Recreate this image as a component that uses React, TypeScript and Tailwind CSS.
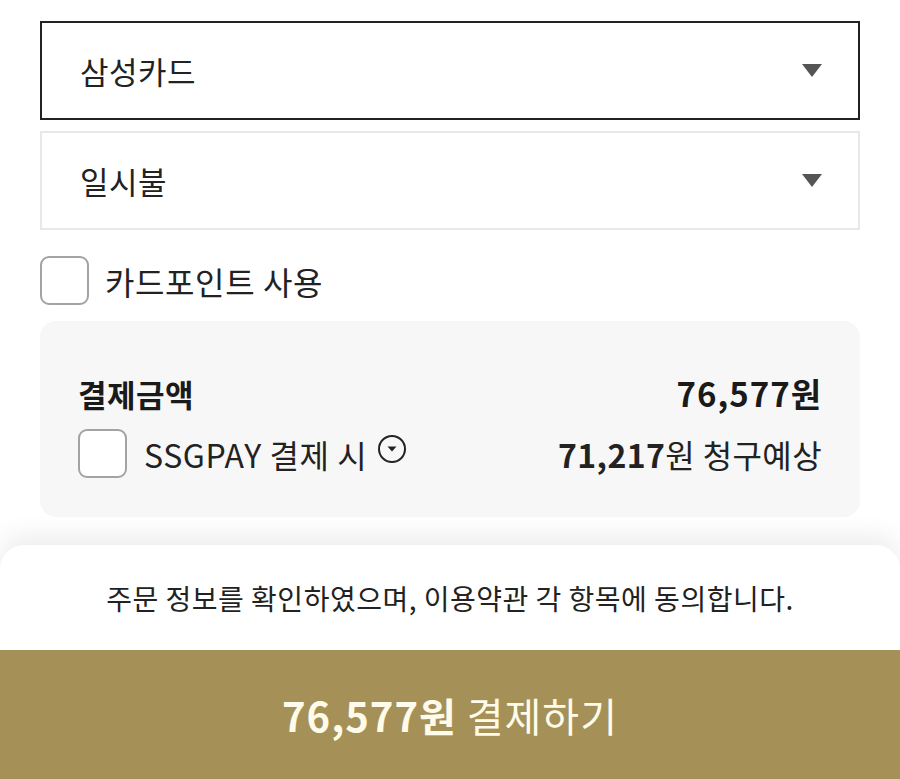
import React from "react";

const font = { fontFamily: '"Noto Sans CJK KR", "Noto Sans", sans-serif' };

function SelectBox({ label, active }: { label: string; active?: boolean }) {
  return (
    <div
      className={`h-[99px] border-2 flex items-center justify-between pl-[38px] pr-[36px] bg-white ${
        active ? "border-[#222222]" : "border-[#e8e8e8]"
      }`}
    >
      <span className="text-[31px] tracking-[0.5px] text-[#222] leading-none">{label}</span>
      <svg width="20" height="14" viewBox="0 0 20 14">
        <path d="M0 0 H20 L10 13 Z" fill="#555555" />
      </svg>
    </div>
  );
}

function CheckBox() {
  return <div className="w-[49px] h-[49px] rounded-[9px] border-2 border-[#a3a3a3] bg-white shrink-0" />;
}

export default function App() {
  return (
    <div className="w-[900px] h-[779px] bg-white flex flex-col overflow-hidden" style={font}>
      {/* 결제수단 */}
      <div className="px-10 pt-[21px]">
        <SelectBox label="삼성카드" active />
        <div className="mt-[11px]">
          <SelectBox label="일시불" />
        </div>

        <div className="mt-[26px] flex items-center gap-[16px]">
          <CheckBox />
          <span className="text-[32px] tracking-[0.6px] text-[#222] leading-none">카드포인트 사용</span>
        </div>

        {/* 결제금액 박스 */}
        <div className="mt-[16px] h-[196px] rounded-2xl bg-[#f7f7f7] pl-[38px] pr-[38px] pt-[52px]">
          <div className="h-[40px] flex items-center justify-between">
            <span className="text-[31px] tracking-[0.5px] font-bold text-[#1a1a1a] leading-none">결제금액</span>
            <span className="text-[33px] tracking-[1px] font-bold text-[#1a1a1a] leading-none">76,577원</span>
          </div>
          <div className="mt-[16px] flex items-center justify-between">
            <div className="flex items-center">
              <CheckBox />
              <span className="ml-[17px] text-[32px] tracking-[0.6px] text-[#222] leading-none">SSGPAY 결제 시</span>
              <svg className="ml-[10px] -mt-[10px]" width="30" height="30" viewBox="0 0 30 30">
                <circle cx="15" cy="15" r="13" fill="none" stroke="#222" strokeWidth="2" />
                <path d="M10.5 12.5 H19.5 L15 17.5 Z" fill="#222" />
              </svg>
            </div>
            <span className="text-[32px] tracking-[0.4px] text-[#222] leading-none">
              <span className="font-bold">71,217</span>원 청구예상
            </span>
          </div>
        </div>
      </div>

      {/* 하단 시트 */}
      <div className="mt-auto rounded-t-[24px] bg-white shadow-[0_-10px_24px_rgba(0,0,0,0.07)]">
        <div className="h-[105px] flex items-center justify-center">
          <span className="text-[28px] tracking-[0.5px] text-[#222] leading-none">
            주문 정보를 확인하였으며, 이용약관 각 항목에 동의합니다.
          </span>
        </div>
        <button className="w-full h-[129px] bg-[#a59157] flex items-center justify-center text-[#fffbea]">
          <span className="text-[40px] tracking-[1px] leading-none">
            <span className="font-bold">76,577원</span> 결제하기
          </span>
        </button>
      </div>
    </div>
  );
}
